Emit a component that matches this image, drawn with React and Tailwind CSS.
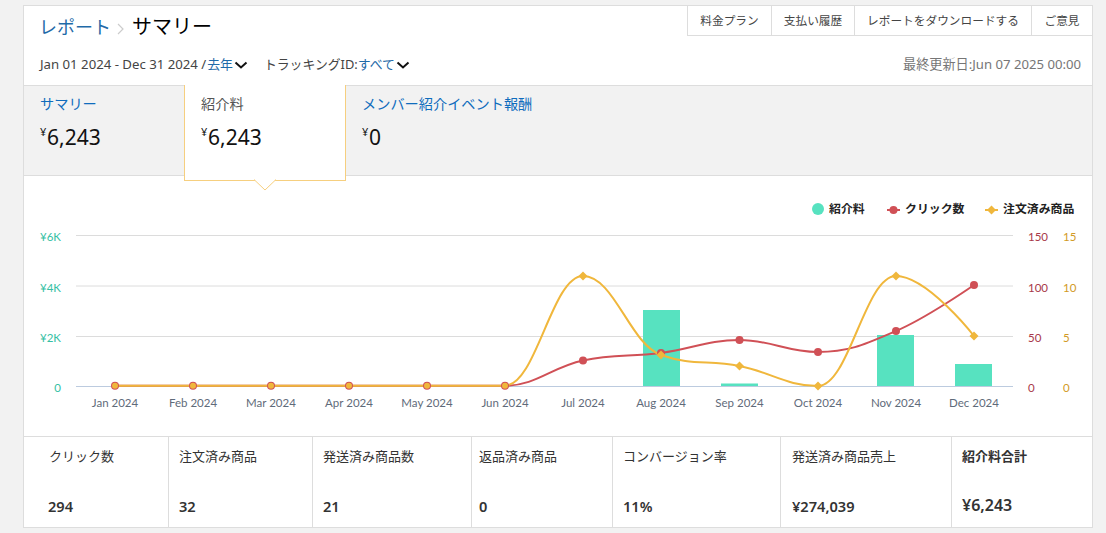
import React from 'react';

const months = ['Jan 2024', 'Feb 2024', 'Mar 2024', 'Apr 2024', 'May 2024', 'Jun 2024', 'Jul 2024', 'Aug 2024', 'Sep 2024', 'Oct 2024', 'Nov 2024', 'Dec 2024'];
const xs = [115, 193, 271, 349, 427, 505, 583, 661, 739.5, 818, 896, 974];
const clicks = [385.7, 385.7, 385.7, 385.7, 385.7, 385.7, 360.5, 353, 340, 352, 331, 285];
const orders = [385.7, 385.7, 385.7, 385.7, 385.7, 385.7, 276, 355, 366, 386, 276, 336];
const bars = [
  { x: 643, y: 310 },
  { x: 721, y: 383.5 },
  { x: 877, y: 335 },
  { x: 955, y: 364 },
];

const stats = [
  { label: 'クリック数', value: '294', cls: 'pl-[25px]', valueCls: 'pl-[24px]' },
  { label: '注文済み商品', value: '32', cls: 'pl-[10px]', valueCls: 'pl-[10px]' },
  { label: '発送済み商品数', value: '21', cls: 'pl-[10px]', valueCls: 'pl-[10px]' },
  { label: '返品済み商品', value: '0', cls: 'pl-[7px]', valueCls: 'pl-[7px]' },
  { label: 'コンバージョン率', value: '11%', cls: 'pl-[10px]', valueCls: 'pl-[10px]' },
  { label: '発送済み商品売上', value: '¥274,039', cls: 'pl-[11px]', valueCls: 'pl-[11px]' },
];

// same spline the chart uses: smoothing 1.5, control points kept tangent
function spline(ys) {
  const ctrl = (i) => {
    const x = xs[i];
    const y = ys[i];
    if (i === 0 || i === xs.length - 1) return { lx: x, ly: y, rx: x, ry: y };
    const px = xs[i - 1], py = ys[i - 1], nx = xs[i + 1], ny = ys[i + 1];
    const lx = (1.5 * x + px) / 2.5;
    let ly = (1.5 * y + py) / 2.5;
    const rx = (1.5 * x + nx) / 2.5;
    let ry = (1.5 * y + ny) / 2.5;
    const c = ((ry - ly) * (rx - x)) / (rx - lx) + y - ry;
    ly += c;
    ry += c;
    if (ly > py && ly > y) {
      ly = Math.max(py, y);
      ry = 2 * y - ly;
    } else if (ly < py && ly < y) {
      ly = Math.min(py, y);
      ry = 2 * y - ly;
    }
    if (ry > ny && ry > y) {
      ry = Math.max(ny, y);
      ly = 2 * y - ry;
    } else if (ry < ny && ry < y) {
      ry = Math.min(ny, y);
      ly = 2 * y - ry;
    }
    return { lx, ly, rx, ry };
  };
  let d = `M${xs[0]} ${ys[0]}`;
  for (let i = 1; i < xs.length; i++) {
    const a = ctrl(i - 1);
    const b = ctrl(i);
    d += ` C${a.rx} ${a.ry} ${b.lx} ${b.ly} ${xs[i]} ${ys[i]}`;
  }
  return d;
}

function Chevron() {
  return (
    <svg width="14" height="14" viewBox="0 0 14 14" className="ml-[1px] mt-[2px]">
      <path d="M1.5 4.5 7 9.5l5.5-5" fill="none" stroke="#111" strokeWidth="2" />
    </svg>
  );
}

function Amount({ children }) {
  return (
    <div className="mt-[9px] flex items-start text-[21px] leading-[28px] text-[#111]">
      <span className="mt-[2px] w-[7px] text-[11px] leading-[14px]">¥</span>
      {children}
    </div>
  );
}

function Chart() {
  const diamond = (x, y) => `M${x} ${y - 4.5}L${x + 4.5} ${y}L${x} ${y + 4.5}L${x - 4.5} ${y}Z`;
  return (
    <svg viewBox="24 176 1068 260" width="1068" height="260" className="block font-['Lato','Noto_Sans_CJK_JP',sans-serif]">
      {[235.5, 286, 336.5].map((y) => (
        <line key={y} x1="76" x2="1013" y1={y} y2={y} stroke="#dcdcdc" />
      ))}
      <line x1="76" x2="1013" y1="386.5" y2="386.5" stroke="#bccbdf" />

      {[['¥6K', 241], ['¥4K', 291.5], ['¥2K', 342], ['0', 392]].map(([t, y]) => (
        <text key={t} x="61" y={y} textAnchor="end" fontSize="11.5" fill="#35bfa4">{t}</text>
      ))}
      {[['150', 241], ['100', 291.5], ['50', 342], ['0', 392]].map(([t, y]) => (
        <text key={t} x="1028" y={y} fontSize="11.5" fill="#a8394a">{t}</text>
      ))}
      {[['15', 241], ['10', 291.5], ['5', 342], ['0', 392]].map(([t, y]) => (
        <text key={t} x="1063" y={y} fontSize="11.5" fill="#d29a25">{t}</text>
      ))}
      {months.map((m, i) => (
        <text key={m} x={xs[i]} y="407" textAnchor="middle" fontSize="11.5" fill="#5f6b7a">{m}</text>
      ))}

      {bars.map((b) => (
        <rect key={b.x} x={b.x} y={b.y} width="37" height={386 - b.y} fill="#57e2c0" />
      ))}

      <path d={spline(clicks)} fill="none" stroke="#d05056" strokeWidth="2" />
      <path d={spline(orders)} fill="none" stroke="#f0b73c" strokeWidth="2" />
      {xs.map((x, i) => (
        <circle key={x} cx={x} cy={clicks[i]} r="4" fill="#d05056" />
      ))}
      {xs.map((x, i) =>
        i < 6 ? (
          <circle key={x} cx={x} cy={orders[i]} r="3" fill="#f0b73c" />
        ) : (
          <path key={x} d={diamond(x, orders[i])} fill="#f0b73c" />
        )
      )}

      <circle cx="818" cy="209" r="6" fill="#57e2c0" />
      <text x="829" y="213" fontSize="11.9" fontWeight="700" fill="#222">紹介料</text>
      <line x1="887" x2="900" y1="210" y2="210" stroke="#d05056" strokeWidth="2" />
      <circle cx="893.5" cy="210" r="4" fill="#d05056" />
      <text x="905" y="213" fontSize="11.9" fontWeight="700" fill="#222">クリック数</text>
      <line x1="985" x2="998" y1="210" y2="210" stroke="#f0b73c" strokeWidth="2" />
      <path d={diamond(991.5, 210)} fill="#f0b73c" />
      <text x="1003" y="213" fontSize="11.9" fontWeight="700" fill="#222">注文済み商品</text>
    </svg>
  );
}

export default function App() {
  return (
    <div className="min-h-[533px] bg-[#f2f2f2] pl-[23px] pr-[13px] pt-[5px] font-['Noto_Sans','Noto_Sans_CJK_JP',sans-serif]">
      <div className="w-[1070px] border border-[#dddddd] bg-white">
        {/* Header */}
        <div className="relative h-[80px] border-b border-[#dddddd]">
          <div className="flex items-center pl-[15px] pt-[7px]">
            <span className="text-[18px] leading-[28px] text-[#1f6aa8]">レポート</span>
            <svg width="8" height="12" viewBox="0 0 8 12" className="ml-[6px] mt-[3px]">
              <path d="M1 1l5 5-5 5" fill="none" stroke="#cccccc" strokeWidth="1.2" />
            </svg>
            <span className="ml-[7px] text-[20px] leading-[28px] text-black">サマリー</span>
          </div>
          <div className="absolute right-0 top-0 flex h-[30px] border-b border-l border-[#dddddd] text-[11.7px] leading-[29px] text-[#444]">
            <span className="w-[84px] border-r border-[#dddddd] text-center">料金プラン</span>
            <span className="w-[83px] border-r border-[#dddddd] text-center">支払い履歴</span>
            <span className="w-[177px] border-r border-[#dddddd] text-center">レポートをダウンロードする</span>
            <span className="w-[60px] text-center">ご意見</span>
          </div>
          <div className="mt-[13px] flex items-center justify-between pl-[16px] pr-[11px] text-[12.85px] leading-[20px] text-[#444]">
            <div className="flex items-center">
              <span className="text-[13.2px]">Jan 01 2024 - Dec 31 2024 /</span>
              <span className="ml-[1px] text-[#1f6aa8]">去年</span>
              <Chevron />
              <span className="ml-[16px]">トラッキングID:</span>
              <span className="text-[#1f6aa8]">すべて</span>
              <Chevron />
            </div>
            <span className="text-[13.15px] text-[#767676]">最終更新日:Jun 07 2025 00:00</span>
          </div>
        </div>

        {/* Tabs */}
        <div className="flex h-[90px] items-start border-b border-[#dddddd] bg-[#f2f2f2]">
          <div className="w-[160px] pl-[16px] pt-[8px]">
            <div className="text-[14.2px] leading-[20px] text-[#0f6cbd]">サマリー</div>
            <Amount>6,243</Amount>
          </div>
          <div className="relative z-10 -mt-[1px] h-[96px] w-[162px] border-x border-b border-[#f6cf7f] bg-white pl-[16px] pt-[9px]">
            <div className="text-[14.2px] leading-[20px] text-[#555]">紹介料</div>
            <Amount>6,243</Amount>
            <svg width="22" height="12" viewBox="0 0 22 12" className="absolute -bottom-[11px] left-[69px]">
              <path d="M0 0.5 11 11 22 0.5" fill="white" stroke="#f6cf7f" />
              <path d="M1 0h20v0.5H1z" fill="white" />
            </svg>
          </div>
          <div className="pl-[16px] pt-[8px]">
            <div className="text-[14.2px] leading-[20px] text-[#0f6cbd]">メンバー紹介イベント報酬</div>
            <Amount>0</Amount>
          </div>
        </div>

        {/* Chart */}
        <Chart />

        {/* Stats */}
        <div className="grid h-[91px] grid-cols-[145px_144px_159px_141px_168px_171px_1fr] border-t border-[#dddddd]">
          {stats.map((s) => (
            <div key={s.label} className="flex flex-col border-r border-[#dddddd]">
              <div className={`pt-[9px] text-[13px] leading-[20px] text-[#333] ${s.cls}`}>{s.label}</div>
              <div className={`mt-[30px] text-[14.6px] font-semibold leading-[20px] text-[#333] ${s.valueCls}`}>{s.value}</div>
            </div>
          ))}
          <div className="flex flex-col pl-[10px]">
            <div className="pt-[9px] text-[13px] font-bold leading-[20px] text-[#333]">紹介料合計</div>
            <div className="mt-[29px] text-[16px] font-semibold leading-[20px] text-[#333]">¥6,243</div>
          </div>
        </div>
      </div>
    </div>
  );
}
